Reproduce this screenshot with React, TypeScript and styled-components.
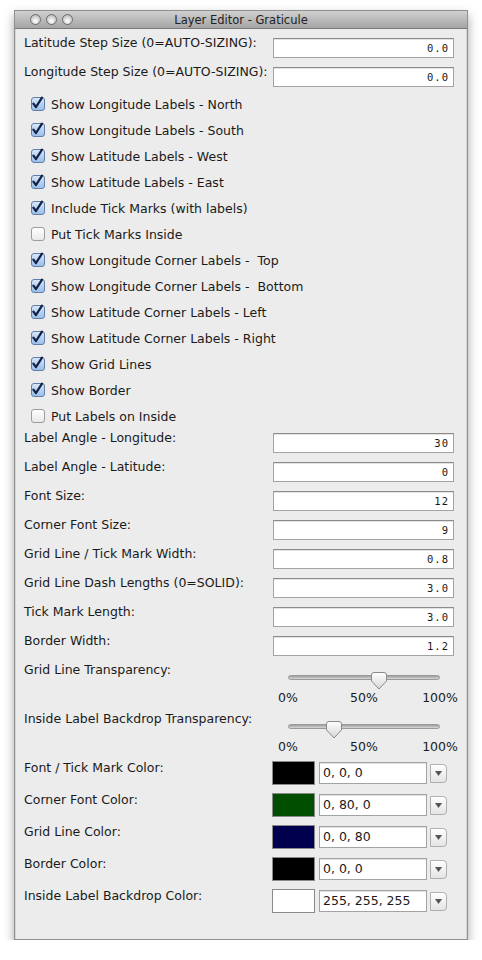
import React from 'react';
import styled, { createGlobalStyle } from 'styled-components';

const GlobalStyle = createGlobalStyle`
  body {
    margin: 0;
    background: #ffffff;
    font-family: "DejaVu Sans", "Liberation Sans", sans-serif;
    color: #1a1a1a;
  }
`;

const numberFields1 = [
  { label: 'Latitude Step Size (0=AUTO-SIZING):', value: '0.0' },
  { label: 'Longitude Step Size (0=AUTO-SIZING):', value: '0.0' },
];

const checks = [
  { label: 'Show Longitude Labels - North', on: true },
  { label: 'Show Longitude Labels - South', on: true },
  { label: 'Show Latitude Labels - West', on: true },
  { label: 'Show Latitude Labels - East', on: true },
  { label: 'Include Tick Marks (with labels)', on: true },
  { label: 'Put Tick Marks Inside', on: false },
  { label: 'Show Longitude Corner Labels -  Top', on: true },
  { label: 'Show Longitude Corner Labels -  Bottom', on: true },
  { label: 'Show Latitude Corner Labels - Left', on: true },
  { label: 'Show Latitude Corner Labels - Right', on: true },
  { label: 'Show Grid Lines', on: true },
  { label: 'Show Border', on: true },
  { label: 'Put Labels on Inside', on: false },
];

const numberFields2 = [
  { label: 'Label Angle - Longitude:', value: '30' },
  { label: 'Label Angle - Latitude:', value: '0' },
  { label: 'Font Size:', value: '12' },
  { label: 'Corner Font Size:', value: '9' },
  { label: 'Grid Line / Tick Mark Width:', value: '0.8' },
  { label: 'Grid Line Dash Lengths (0=SOLID):', value: '3.0' },
  { label: 'Tick Mark Length:', value: '3.0' },
  { label: 'Border Width:', value: '1.2' },
];

const sliders = [
  { label: 'Grid Line Transparency:', pct: 60 },
  { label: 'Inside Label Backdrop Transparency:', pct: 30 },
];

const colors = [
  { label: 'Font / Tick Mark Color:', swatch: '#000000', value: '0, 0, 0' },
  { label: 'Corner Font Color:', swatch: '#004f00', value: '0, 80, 0' },
  { label: 'Grid Line Color:', swatch: '#00004f', value: '0, 0, 80' },
  { label: 'Border Color:', swatch: '#000000', value: '0, 0, 0' },
  { label: 'Inside Label Backdrop Color:', swatch: '#ffffff', value: '255, 255, 255' },
];

function CheckMark() {
  return (
    <svg width="13" height="14" viewBox="0 0 13 14">
      <path d="M2.4 7.6 L5 11 L11 1.6" fill="none" stroke="#14224a" strokeWidth="2.3" strokeLinecap="round" strokeLinejoin="round" />
    </svg>
  );
}

function SliderThumb() {
  return (
    <svg width="18" height="18" viewBox="0 0 18 18">
      <defs>
        <linearGradient id="thumbFill" x1="0" y1="0" x2="0" y2="1">
          <stop offset="0" stopColor="#ffffff" />
          <stop offset="1" stopColor="#d6d6d6" />
        </linearGradient>
      </defs>
      <path d="M1.5 3 Q1.5 0.5 4 0.5 L14 0.5 Q16.5 0.5 16.5 3 L16.5 9 L9 17 L1.5 9 Z" fill="url(#thumbFill)" stroke="#8a8a8a" strokeWidth="1" />
    </svg>
  );
}

export default function App(): JSX.Element {
  return (
    <Page>
      <GlobalStyle />
      <Window>
        <TitleBar>
          <Lights>
            <Light />
            <Light />
            <Light />
          </Lights>
          <Title>Layer Editor - Graticule</Title>
          <span />
        </TitleBar>
        <Body>
          {numberFields1.map((f) => (
            <FieldRow key={f.label}>
              <Label>{f.label}</Label>
              <NumberField>{f.value}</NumberField>
            </FieldRow>
          ))}
          <CheckList>
            {checks.map((c) => (
              <CheckRow key={c.label}>
                <Box $on={c.on}>
                  {c.on && (
                    <MarkSlot>
                      <CheckMark />
                    </MarkSlot>
                  )}
                </Box>
                <CheckLabel>{c.label}</CheckLabel>
              </CheckRow>
            ))}
          </CheckList>
          {numberFields2.map((f) => (
            <FieldRow key={f.label}>
              <Label>{f.label}</Label>
              <NumberField>{f.value}</NumberField>
            </FieldRow>
          ))}
          {sliders.map((s) => (
            <SliderRow key={s.label}>
              <Label>{s.label}</Label>
              <div>
                <SliderBox>
                  <Track />
                  <Thumb style={{ left: `calc(${s.pct}% - 9px)` }}>
                    <SliderThumb />
                  </Thumb>
                </SliderBox>
                <Ticks>
                  <Tick>0%</Tick>
                  <Tick>50%</Tick>
                  <Tick>100%</Tick>
                </Ticks>
              </div>
            </SliderRow>
          ))}
          {colors.map((c) => (
            <ColorRow key={c.label}>
              <Label>{c.label}</Label>
              <ColorControls>
                <Swatch $color={c.swatch} />
                <ColorField>{c.value}</ColorField>
                <DropButton>
                  <svg width="7" height="5" viewBox="0 0 7 5">
                    <path d="M0 0 L7 0 L3.5 5 Z" fill="#555" />
                  </svg>
                </DropButton>
              </ColorControls>
            </ColorRow>
          ))}
        </Body>
      </Window>
    </Page>
  );
}

const Page = styled.div`
  padding: 10px 0 0 14px;
`;

const Window = styled.div`
  width: 454px;
  height: 930px;
  box-sizing: border-box;
  background: #ececec;
  border: 1px solid #8f8f8f;
  box-shadow: inset -1px 0 0 #d6d6d6, inset 1px 0 0 #d6d6d6, 0 5px 10px rgba(0, 0, 0, 0.35);
  display: flex;
  flex-direction: column;
`;

const TitleBar = styled.div`
  height: 17px;
  display: grid;
  grid-template-columns: 1fr auto 1fr;
  align-items: center;
  background: linear-gradient(#d0d0d0, #a5a5a5);
  border-bottom: 1px solid #7a7a7a;
`;

const Lights = styled.div`
  display: flex;
  gap: 5px;
  padding-left: 15px;
`;

const Light = styled.div`
  width: 11px;
  height: 11px;
  border-radius: 50%;
  box-sizing: border-box;
  border: 1px solid #6c6c6c;
  background: radial-gradient(circle at 50% 65%, #ffffff 0%, #d2d2d2 55%, #a9a9a9 100%);
`;

const Title = styled.div`
  font-size: 11.5px;
  color: #222;
`;

const Body = styled.div`
  padding: 6px 13px 0 9px;
  display: flex;
  flex-direction: column;
`;

const FieldRow = styled.div`
  height: 29px;
  display: flex;
  align-items: flex-start;
`;

const Label = styled.div`
  width: 249px;
  flex: none;
  font-size: 12.5px;
  line-height: 16px;
  white-space: nowrap;
`;

const NumberField = styled.div`
  margin-top: 3px;
  width: 182px;
  height: 20px;
  box-sizing: border-box;
  background: #fff;
  border: 1px solid #a3a3a3;
  border-top-color: #8c8c8c;
  box-shadow: inset 0 1px 0 #e2e2e2;
  text-align: right;
  padding-right: 4px;
  font-family: "DejaVu Sans Mono", "Liberation Mono", monospace;
  font-size: 10.5px;
  letter-spacing: 1px;
  line-height: 18px;
`;

const CheckList = styled.div`
  display: flex;
  flex-direction: column;
  margin: -2px 0 1px;
`;

const CheckRow = styled.div`
  height: 26px;
  display: flex;
  align-items: center;
  padding-left: 7px;
`;

const Box = styled.div<{ $on: boolean }>`
  position: relative;
  width: 14px;
  height: 14px;
  box-sizing: border-box;
  border-radius: 3px;
  border: 1px solid ${(p) => (p.$on ? '#5f7fa8' : '#9c9c9c')};
  background: ${(p) => (p.$on ? 'linear-gradient(#d6e6f7, #9bc0e8)' : 'linear-gradient(#ffffff, #e9e9e9)')};
  margin-top: -1px;
`;

const MarkSlot = styled.div`
  position: absolute;
  left: -1px;
  top: -3px;
`;

const CheckLabel = styled.span`
  margin-left: 6px;
  font-size: 12.5px;
  white-space: pre;
`;

const SliderRow = styled.div`
  height: 49px;
  display: flex;
  align-items: flex-start;
`;

const SliderBox = styled.div`
  position: relative;
  margin-left: 15px;
  width: 152px;
  height: 28px;
`;

const Track = styled.div`
  position: relative;
  top: 13px;
  height: 5px;
  border-radius: 3px;
  background: linear-gradient(#9e9e9e, #d8d8d8);
  border: 1px solid #9a9a9a;
  box-sizing: border-box;
`;

const Thumb = styled.div`
  position: absolute;
  top: 10px;
  width: 18px;
  height: 18px;
`;

const Ticks = styled.div`
  margin-left: 15px;
  width: 152px;
  display: flex;
  justify-content: space-between;
`;

const Tick = styled.div`
  width: 0;
  display: flex;
  justify-content: center;
  font-size: 12.5px;
  line-height: 16px;
  white-space: nowrap;
`;

const ColorRow = styled.div`
  height: 32px;
  display: flex;
  align-items: flex-start;
`;

const ColorControls = styled.div`
  display: flex;
  align-items: flex-start;
  margin-left: -1px;
`;

const Swatch = styled.div<{ $color: string }>`
  margin-top: 1px;
  width: 43px;
  height: 24px;
  box-sizing: border-box;
  border: 1px solid #8a8a8a;
  background: ${(p) => p.$color};
`;

const ColorField = styled.div`
  margin: 2px 0 0 4px;
  width: 108px;
  height: 22px;
  box-sizing: border-box;
  background: #fff;
  border: 1px solid #a3a3a3;
  box-shadow: inset 0 1px 0 #e2e2e2;
  padding-left: 3px;
  font-size: 12.5px;
  line-height: 20px;
`;

const DropButton = styled.div`
  margin: 4px 0 0 3px;
  width: 17px;
  height: 19px;
  box-sizing: border-box;
  border: 1px solid #b0b0b0;
  border-radius: 0 4px 4px 0;
  background: linear-gradient(#ffffff, #e4e4e4);
  display: flex;
  align-items: center;
  justify-content: center;
`;
